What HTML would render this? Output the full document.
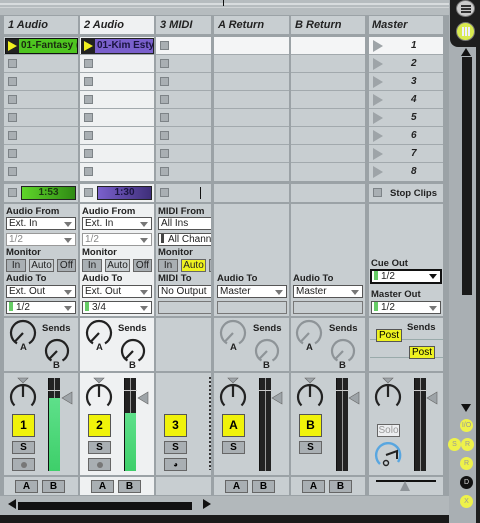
<!DOCTYPE html>
<html><head><meta charset="utf-8"><style>
*{margin:0;padding:0;box-sizing:border-box}
body{width:480px;height:523px;overflow:hidden;background:#a9afb3;font-family:"Liberation Sans",sans-serif;position:relative}
.a{position:absolute}
.p{position:absolute;background:#c8ced1}
.w{background:#eff1f2!important}
.h{position:absolute;font:italic bold 11px "Liberation Sans",sans-serif;color:#222;}
.sq{position:absolute;width:9px;height:9px;background:#a9afb3;border:1px solid #7d8387}
.ln{position:absolute;height:1px;background:#a2a9ad}
.lb{position:absolute;font:bold 9.5px "Liberation Sans",sans-serif;color:#222;white-space:nowrap}
.dd{position:absolute;height:13px;background:#fff;border:1px solid #555;font:10px "Liberation Sans",sans-serif;color:#222;padding-left:2px;line-height:11px;white-space:nowrap;overflow:hidden}
.dd i{position:absolute;right:3px;top:4px;width:0;height:0;border-left:4px solid transparent;border-right:4px solid transparent;border-top:5px solid #777}
.eb{position:absolute;height:13px;background:#c8ced1;border:1px solid #777}
.bt{position:absolute;height:13px;background:#a9afb3;border:1px solid #666;font:10px "Liberation Sans",sans-serif;text-align:center;line-height:11px;color:#222}
.yb{position:absolute;width:23px;height:23px;background:#f0f20a;border:1px solid #555;font:bold 12px "Liberation Sans",sans-serif;text-align:center;line-height:21px}
.sb{position:absolute;width:23px;height:13px;background:#a9afb3;border:1px solid #666;font:bold 10px "Liberation Sans",sans-serif;text-align:center;line-height:11px}
.mt{position:absolute;width:12px;height:93px;background:#222;border-left:1px solid #111}
.num{position:absolute;font:italic bold 10px "Liberation Sans",sans-serif;color:#222}
.tri{position:absolute;width:0;height:0;border-top:6px solid transparent;border-bottom:6px solid transparent;border-left:10px solid #9ea4a8}
.ab{position:absolute;width:23px;height:13px;background:#a9afb3;border:1px solid #666;font:bold 10px "Liberation Sans",sans-serif;text-align:center;line-height:11px}
.yc{position:absolute;width:13px;height:13px;border-radius:50%;background:#eef24a;font:7px "Liberation Sans",sans-serif;color:#999;text-align:center;line-height:13px}
</style></head><body>
<div class="a" style="left:0;top:0;width:449px;height:15px;background:#b6bcbf"></div>
<div class="a" style="left:0;top:3px;width:449px;height:2px;background:#d8dcde"></div>
<div class="a" style="left:0;top:7px;width:449px;height:1px;background:#d0d4d6"></div>
<div class="a" style="left:223px;top:0;width:1px;height:6px;background:#111"></div>
<div class="a" style="left:0;top:15px;width:449px;height:481px;background:#9ba2a6"></div>

<div class="p" style="left:4px;top:16px;width:74px;height:18px"></div><div class="h" style="left:8px;top:19px">1 Audio</div>
<div class="p w" style="left:80px;top:16px;width:74px;height:18px"></div><div class="h" style="left:84px;top:19px">2 Audio</div>
<div class="p" style="left:156px;top:16px;width:55px;height:18px"></div><div class="h" style="left:160px;top:19px">3 MIDI</div>
<div class="p" style="left:214px;top:16px;width:75px;height:18px"></div><div class="h" style="left:218px;top:19px">A Return</div>
<div class="p" style="left:291px;top:16px;width:74px;height:18px"></div><div class="h" style="left:295px;top:19px">B Return</div>
<div class="p" style="left:369px;top:16px;width:74px;height:18px"></div><div class="h" style="left:372px;top:19px">Master</div>

<div class="p" style="left:4px;top:37px;width:74px;height:144px"></div>
<div class="p w" style="left:80px;top:37px;width:74px;height:144px"></div>
<div class="p" style="left:156px;top:37px;width:55px;height:144px"></div>
<div class="p" style="left:214px;top:37px;width:75px;height:144px"></div>
<div class="p" style="left:291px;top:37px;width:74px;height:144px"></div>
<div class="p" style="left:369px;top:37px;width:74px;height:144px"></div>
<div class="a" style="left:156px;top:37px;width:55px;height:18px;background:#f4f5f6"></div>
<div class="a" style="left:214px;top:37px;width:75px;height:18px;background:#f4f5f6"></div>
<div class="a" style="left:291px;top:37px;width:74px;height:18px;background:#f4f5f6"></div>
<div class="a" style="left:369px;top:37px;width:74px;height:18px;background:#f4f5f6"></div>
<div class="ln" style="left:4px;top:54px;width:439px"></div>
<div class="ln" style="left:4px;top:72px;width:439px"></div>
<div class="ln" style="left:4px;top:90px;width:439px"></div>
<div class="ln" style="left:4px;top:108px;width:439px"></div>
<div class="ln" style="left:4px;top:126px;width:439px"></div>
<div class="ln" style="left:4px;top:144px;width:439px"></div>
<div class="ln" style="left:4px;top:162px;width:439px"></div>
<div class="a" style="left:78px;top:16px;width:2px;height:480px;background:#9ba2a6"></div>
<div class="a" style="left:154px;top:16px;width:2px;height:480px;background:#9ba2a6"></div>
<div class="a" style="left:211px;top:16px;width:3px;height:480px;background:#9ba2a6"></div>
<div class="a" style="left:289px;top:16px;width:2px;height:480px;background:#9ba2a6"></div>
<div class="a" style="left:365px;top:16px;width:4px;height:480px;background:#9ba2a6"></div>

<div class="a" style="left:5px;top:38px;width:73px;height:16px;background:#222;border:1px solid #111"></div>
<div class="a" style="left:19px;top:39px;width:58px;height:14px;background:#4ec520;font:bold 10px 'Liberation Sans',sans-serif;line-height:14px;padding-left:2px;overflow:hidden;white-space:nowrap;color:#1a2a10">01-Fantasy (</div>
<div class="a" style="left:8px;top:41px;border-top:5px solid transparent;border-bottom:5px solid transparent;border-left:9px solid #f0f020"></div>
<div class="a" style="left:81px;top:38px;width:73px;height:16px;background:#222"></div>
<div class="a" style="left:95px;top:39px;width:58px;height:14px;background:#7a60cc;font:bold 10px 'Liberation Sans',sans-serif;line-height:14px;padding-left:2px;overflow:hidden;white-space:nowrap;color:#1a1440">01-Kim Esty</div>
<div class="a" style="left:84px;top:41px;border-top:5px solid transparent;border-bottom:5px solid transparent;border-left:9px solid #f0f020"></div>

<div class="sq" style="left:8px;top:59px"></div><div class="sq" style="left:8px;top:77px"></div><div class="sq" style="left:8px;top:95px"></div><div class="sq" style="left:8px;top:113px"></div><div class="sq" style="left:8px;top:131px"></div><div class="sq" style="left:8px;top:149px"></div><div class="sq" style="left:8px;top:167px"></div>
<div class="sq" style="left:84px;top:59px"></div><div class="sq" style="left:84px;top:77px"></div><div class="sq" style="left:84px;top:95px"></div><div class="sq" style="left:84px;top:113px"></div><div class="sq" style="left:84px;top:131px"></div><div class="sq" style="left:84px;top:149px"></div><div class="sq" style="left:84px;top:167px"></div>
<div class="sq" style="left:160px;top:41px"></div><div class="sq" style="left:160px;top:59px"></div><div class="sq" style="left:160px;top:77px"></div><div class="sq" style="left:160px;top:95px"></div><div class="sq" style="left:160px;top:113px"></div><div class="sq" style="left:160px;top:131px"></div><div class="sq" style="left:160px;top:149px"></div><div class="sq" style="left:160px;top:167px"></div>

<div class="tri" style="left:373px;top:40px"></div><div class="num" style="left:411px;top:40px">1</div>
<div class="tri" style="left:373px;top:58px"></div><div class="num" style="left:411px;top:58px">2</div>
<div class="tri" style="left:373px;top:76px"></div><div class="num" style="left:411px;top:76px">3</div>
<div class="tri" style="left:373px;top:94px"></div><div class="num" style="left:411px;top:94px">4</div>
<div class="tri" style="left:373px;top:112px"></div><div class="num" style="left:411px;top:112px">5</div>
<div class="tri" style="left:373px;top:130px"></div><div class="num" style="left:411px;top:130px">6</div>
<div class="tri" style="left:373px;top:148px"></div><div class="num" style="left:411px;top:148px">7</div>
<div class="tri" style="left:373px;top:166px"></div><div class="num" style="left:411px;top:166px">8</div>

<div class="p" style="left:4px;top:184px;width:74px;height:18px"></div>
<div class="p w" style="left:80px;top:184px;width:74px;height:18px"></div>
<div class="p" style="left:156px;top:184px;width:55px;height:18px"></div>
<div class="p" style="left:214px;top:184px;width:75px;height:18px"></div>
<div class="p" style="left:291px;top:184px;width:74px;height:18px"></div>
<div class="p" style="left:369px;top:184px;width:74px;height:18px"></div>
<div class="sq" style="left:8px;top:188px"></div>
<div class="a" style="left:21px;top:186px;width:55px;height:14px;background:linear-gradient(90deg,#5fd62a,#2f8a14);border:1px solid #222;font:bold 10px 'Liberation Sans',sans-serif;text-align:center;line-height:12px;color:#1a3a10">1:53</div>
<div class="sq" style="left:84px;top:188px"></div>
<div class="a" style="left:97px;top:186px;width:55px;height:14px;background:linear-gradient(90deg,#7a60cc,#3f2f7a);border:1px solid #222;font:bold 10px 'Liberation Sans',sans-serif;text-align:center;line-height:12px;color:#1a1440">1:30</div>
<div class="sq" style="left:160px;top:188px"></div>
<div class="a" style="left:200px;top:187px;width:1px;height:12px;background:#111"></div>
<div class="sq" style="left:373px;top:188px"></div>
<div class="lb" style="left:390px;top:188px">Stop Clips</div>

<div class="p" style="left:4px;top:204px;width:74px;height:112px"></div>
<div class="p w" style="left:80px;top:204px;width:74px;height:112px"></div>
<div class="p" style="left:156px;top:204px;width:55px;height:112px"></div>
<div class="p" style="left:214px;top:204px;width:75px;height:112px"></div>
<div class="p" style="left:291px;top:204px;width:74px;height:112px"></div>
<div class="p" style="left:369px;top:204px;width:74px;height:112px"></div>

<div class="lb" style="left:6px;top:206px">Audio From</div>
<div class="dd" style="left:6px;top:217px;width:70px">Ext. In<i></i></div>
<div class="dd" style="left:6px;top:233px;width:70px;color:#888;border-color:#999">1/2<i></i></div>
<div class="lb" style="left:6px;top:247px">Monitor</div>
<div class="bt" style="left:6px;top:259px;width:20px">In</div>
<div class="bt" style="left:29px;top:259px;width:25px;background:#c8ced1">Auto</div>
<div class="bt" style="left:57px;top:259px;width:19px">Off</div>
<div class="lb" style="left:6px;top:273px">Audio To</div>
<div class="dd" style="left:6px;top:285px;width:70px">Ext. Out<i></i></div>
<div class="dd" style="left:6px;top:301px;width:70px"><span style="display:inline-block;width:4px;height:9px;background:#6c6;vertical-align:-1px;margin-right:3px"></span>1/2<i></i></div>

<div class="lb" style="left:82px;top:206px">Audio From</div>
<div class="dd" style="left:82px;top:217px;width:70px">Ext. In<i></i></div>
<div class="dd" style="left:82px;top:233px;width:70px;color:#888;border-color:#999">1/2<i></i></div>
<div class="lb" style="left:82px;top:247px">Monitor</div>
<div class="bt" style="left:82px;top:259px;width:20px">In</div>
<div class="bt" style="left:105px;top:259px;width:25px;background:#c8ced1">Auto</div>
<div class="bt" style="left:133px;top:259px;width:19px">Off</div>
<div class="lb" style="left:82px;top:273px">Audio To</div>
<div class="dd" style="left:82px;top:285px;width:70px">Ext. Out<i></i></div>
<div class="dd" style="left:82px;top:301px;width:70px"><span style="display:inline-block;width:4px;height:9px;background:#6c6;vertical-align:-1px;margin-right:3px"></span>3/4<i></i></div>

<div class="lb" style="left:158px;top:206px">MIDI From</div>
<div class="dd" style="left:158px;top:217px;width:53px;border-right:none">All Ins</div>
<div class="dd" style="left:158px;top:233px;width:53px;border-right:none"><span style="display:inline-block;width:3px;height:9px;background:#444;vertical-align:-1px;margin-right:4px"></span>All Chann</div>
<div class="lb" style="left:158px;top:247px">Monitor</div>
<div class="bt" style="left:158px;top:259px;width:20px">In</div>
<div class="bt" style="left:181px;top:259px;width:25px;background:#eef220">Auto</div>
<div class="bt" style="left:209px;top:259px;width:2px;border-right:none"></div>
<div class="lb" style="left:158px;top:273px">MIDI To</div>
<div class="dd" style="left:158px;top:285px;width:53px;border-right:none">No Output</div>
<div class="eb" style="left:158px;top:301px;width:53px;border-right:none"></div>

<div class="lb" style="left:217px;top:273px">Audio To</div>
<div class="dd" style="left:217px;top:285px;width:70px">Master<i></i></div>
<div class="eb" style="left:217px;top:301px;width:70px"></div>
<div class="lb" style="left:293px;top:273px">Audio To</div>
<div class="dd" style="left:293px;top:285px;width:70px">Master<i></i></div>
<div class="eb" style="left:293px;top:301px;width:70px"></div>

<div class="lb" style="left:371px;top:258px">Cue Out</div>
<div class="dd" style="left:370px;top:269px;width:72px;height:15px;border:2px solid #111;line-height:11px"><span style="display:inline-block;width:4px;height:9px;background:#6c6;vertical-align:-1px;margin-right:3px"></span>1/2<i style="border-top-color:#111;top:3px"></i></div>
<div class="lb" style="left:371px;top:289px">Master Out</div>
<div class="dd" style="left:371px;top:301px;width:70px"><span style="display:inline-block;width:4px;height:9px;background:#6c6;vertical-align:-1px;margin-right:3px"></span>1/2<i></i></div>

<div class="p" style="left:4px;top:318px;width:74px;height:53px"></div>
<div class="p w" style="left:80px;top:318px;width:74px;height:53px"></div>
<div class="p" style="left:156px;top:318px;width:55px;height:53px"></div>
<div class="p" style="left:214px;top:318px;width:75px;height:53px"></div>
<div class="p" style="left:291px;top:318px;width:74px;height:53px"></div>
<div class="p" style="left:369px;top:318px;width:74px;height:53px"></div>
<svg class="a" style="left:0;top:316px" width="370" height="56">
<defs>
<path id="kA" d="M-6 10.4 A12 12 0 1 1 6 10.4 M0 0 L-8 8.5"/>
<path id="kB" d="M-5.5 9.5 A11 11 0 1 1 5.5 9.5 M0 0 L-7.5 7.8"/>
</defs>
<g fill="none" stroke-width="2.2">
<g stroke="#222"><use href="#kA" x="23" y="17"/><use href="#kB" x="57" y="35"/><use href="#kA" x="99" y="17"/><use href="#kB" x="133" y="35"/></g>
<g stroke="#8e9498"><use href="#kA" x="233" y="17"/><use href="#kB" x="267" y="35"/><use href="#kA" x="309" y="17"/><use href="#kB" x="343" y="35"/></g>
</g>
<g font-family="Liberation Sans" font-weight="bold" font-size="9.5" fill="#222">
<text x="20" y="34">A</text><text x="53" y="52">B</text><text x="96" y="34">A</text><text x="129" y="52">B</text>
<text x="230" y="34">A</text><text x="263" y="52">B</text><text x="306" y="34">A</text><text x="339" y="52">B</text>
<text x="42" y="15">Sends</text><text x="118" y="15">Sends</text><text x="253" y="15">Sends</text><text x="329" y="15">Sends</text>
</g></svg>
<div class="lb" style="left:407px;top:322px">Sends</div>
<div class="a" style="left:370px;top:339px;width:73px;height:1px;background:#9aa"></div>
<div class="a" style="left:370px;top:357px;width:73px;height:1px;background:#9aa"></div>
<div class="a" style="left:376px;top:329px;width:26px;height:13px;background:#eef220;border:1px solid #555;font:10px 'Liberation Sans',sans-serif;text-align:center;line-height:11px">Post</div>
<div class="a" style="left:409px;top:346px;width:26px;height:13px;background:#eef220;border:1px solid #555;font:10px 'Liberation Sans',sans-serif;text-align:center;line-height:11px">Post</div>

<div class="p" style="left:4px;top:373px;width:74px;height:102px"></div>
<div class="p w" style="left:80px;top:373px;width:74px;height:102px"></div>
<div class="p" style="left:156px;top:373px;width:55px;height:102px"></div>
<div class="p" style="left:214px;top:373px;width:75px;height:102px"></div>
<div class="p" style="left:291px;top:373px;width:74px;height:102px"></div>
<div class="p" style="left:369px;top:373px;width:74px;height:102px"></div>
<svg class="a" style="left:0;top:372px" width="445" height="104">
<defs><path id="kp" d="M-8.5 8.5 A12 12 0 1 1 8.5 8.5 M0 -12 V0"/></defs>
<g fill="none" stroke="#222" stroke-width="2.2">
<use href="#kp" x="23" y="25"/><use href="#kp" x="99" y="25"/><use href="#kp" x="233" y="25"/><use href="#kp" x="310" y="25"/><use href="#kp" x="388" y="25"/>
</g>
<g fill="#9ea4a8" stroke="#666" stroke-width="0.6">
<path d="M18 6 H28 L23 11Z"/><path d="M94 6 H104 L99 11Z"/><path d="M228 6 H238 L233 11Z"/><path d="M305 6 H315 L310 11Z"/><path d="M383 6 H393 L388 11Z"/>
<path d="M72 20 L62 26 L72 32Z"/><path d="M148 20 L138 26 L148 32Z"/><path d="M282 20 L272 26 L282 32Z"/><path d="M359 20 L349 26 L359 32Z"/><path d="M437 20 L427 26 L437 32Z"/>
</g>
<path d="M210 5 V98" stroke="#333" stroke-width="2" stroke-dasharray="2,2"/>
<path d="M380 92 A12 12 0 1 1 398 90" fill="none" stroke="#58a6e0" stroke-width="2.4"/>
<path d="M386 83 L397 79 V87" fill="none" stroke="#222" stroke-width="2"/>
<circle cx="386" cy="91" r="2.5" fill="none" stroke="#222" stroke-width="1.4"/>
</svg>
<div class="mt" style="left:48px;top:378px"></div>
<div class="a" style="left:49px;top:398px;width:11px;height:73px;background:linear-gradient(#5ee08a,#3ecf6a)"></div>
<div class="a" style="left:54px;top:378px;width:1px;height:20px;background:#999"></div>
<div class="mt" style="left:124px;top:378px"></div>
<div class="a" style="left:125px;top:413px;width:11px;height:58px;background:linear-gradient(#5ee08a,#3ecf6a)"></div>
<div class="a" style="left:130px;top:378px;width:1px;height:35px;background:#999"></div>
<div class="mt" style="left:259px;top:378px"></div><div class="a" style="left:265px;top:378px;width:1px;height:93px;background:#999"></div>
<div class="mt" style="left:336px;top:378px"></div><div class="a" style="left:342px;top:378px;width:1px;height:93px;background:#999"></div>
<div class="mt" style="left:414px;top:378px"></div><div class="a" style="left:420px;top:378px;width:1px;height:93px;background:#999"></div>
<div class="a" style="left:48px;top:390px;width:13px;height:1px;background:#ccc"></div>
<div class="a" style="left:124px;top:390px;width:13px;height:1px;background:#ccc"></div>
<div class="a" style="left:259px;top:390px;width:13px;height:1px;background:#ccc"></div>
<div class="a" style="left:336px;top:390px;width:13px;height:1px;background:#ccc"></div>
<div class="a" style="left:414px;top:390px;width:13px;height:1px;background:#ccc"></div>

<div class="yb" style="left:12px;top:414px">1</div><div class="sb" style="left:12px;top:441px">S</div>
<div class="sb" style="left:12px;top:458px"><span style="display:inline-block;width:6px;height:6px;border-radius:50%;background:#777;margin-top:3px"></span></div>
<div class="yb" style="left:88px;top:414px">2</div><div class="sb" style="left:88px;top:441px">S</div>
<div class="sb" style="left:88px;top:458px"><span style="display:inline-block;width:6px;height:6px;border-radius:50%;background:#777;margin-top:3px"></span></div>
<div class="yb" style="left:164px;top:414px">3</div><div class="sb" style="left:164px;top:441px">S</div>
<div class="sb" style="left:164px;top:458px;font-size:8px">◕</div>
<div class="yb" style="left:222px;top:414px">A</div><div class="sb" style="left:222px;top:441px">S</div>
<div class="yb" style="left:299px;top:414px">B</div><div class="sb" style="left:299px;top:441px">S</div>
<div class="a" style="left:377px;top:424px;width:23px;height:13px;border:1px solid #666;background:#eceef0;font:10px 'Liberation Sans',sans-serif;color:#999;text-align:center;line-height:11px">Solo</div>

<div class="p" style="left:4px;top:477px;width:74px;height:18px"></div>
<div class="p w" style="left:80px;top:477px;width:74px;height:18px"></div>
<div class="p" style="left:156px;top:477px;width:55px;height:18px"></div>
<div class="p" style="left:214px;top:477px;width:75px;height:18px"></div>
<div class="p" style="left:291px;top:477px;width:74px;height:18px"></div>
<div class="p" style="left:369px;top:477px;width:74px;height:18px"></div>
<div class="ab" style="left:15px;top:480px">A</div><div class="ab" style="left:42px;top:480px">B</div>
<div class="ab" style="left:91px;top:480px">A</div><div class="ab" style="left:118px;top:480px">B</div>
<div class="ab" style="left:225px;top:480px">A</div><div class="ab" style="left:252px;top:480px">B</div>
<div class="ab" style="left:302px;top:480px">A</div><div class="ab" style="left:329px;top:480px">B</div>
<div class="a" style="left:376px;top:480px;width:60px;height:2px;background:#111"></div>
<div class="a" style="left:400px;top:481px;border-left:5px solid transparent;border-right:5px solid transparent;border-bottom:10px solid #8e9498"></div>

<div class="a" style="left:0;top:496px;width:449px;height:19px;background:#b2b8bb"></div>
<div class="a" style="left:8px;top:499px;border-top:5px solid transparent;border-bottom:5px solid transparent;border-right:8px solid #111"></div>
<div class="a" style="left:18px;top:502px;width:174px;height:8px;background:#111"></div>
<div class="a" style="left:203px;top:499px;border-top:5px solid transparent;border-bottom:5px solid transparent;border-left:8px solid #111"></div>
<div class="a" style="left:0;top:515px;width:480px;height:8px;background:#1a1a1a"></div>

<div class="a" style="left:449px;top:0;width:31px;height:523px;background:#a9afb3"></div>
<div class="a" style="left:450px;top:0;width:30px;height:47px;background:#1e1e1e;border-bottom-left-radius:8px"></div>
<div class="a" style="left:476px;top:0;width:4px;height:523px;background:#1e1e1e"></div>
<div class="a" style="left:456px;top:0;width:19px;height:17px;border-radius:50%;background:#ccc;border:1px solid #777"></div>
<div class="a" style="left:461px;top:5px;width:10px;height:2px;background:#333;box-shadow:0 3px 0 #333,0 6px 0 #333"></div>
<div class="a" style="left:456px;top:22px;width:19px;height:19px;border-radius:50%;background:#d8ea50;border:1px solid #777"></div>
<div class="a" style="left:462px;top:27px;width:2px;height:9px;background:#eef;box-shadow:3px 0 0 #eef,6px 0 0 #eef"></div>
<div class="a" style="left:461px;top:48px;border-left:5px solid transparent;border-right:5px solid transparent;border-bottom:8px solid #111"></div>
<div class="a" style="left:462px;top:57px;width:10px;height:238px;background:#1a1a1a"></div>
<div class="a" style="left:461px;top:404px;border-left:5px solid transparent;border-right:5px solid transparent;border-top:8px solid #111"></div>
<div class="yc" style="left:460px;top:419px">I/O</div>
<div class="yc" style="left:448px;top:438px">S</div><div class="yc" style="left:461px;top:438px">R</div>
<div class="yc" style="left:460px;top:457px">R</div>
<div class="yc" style="left:460px;top:476px;background:#111;color:#ddd">D</div>
<div class="yc" style="left:460px;top:495px">X</div>
</body></html>
